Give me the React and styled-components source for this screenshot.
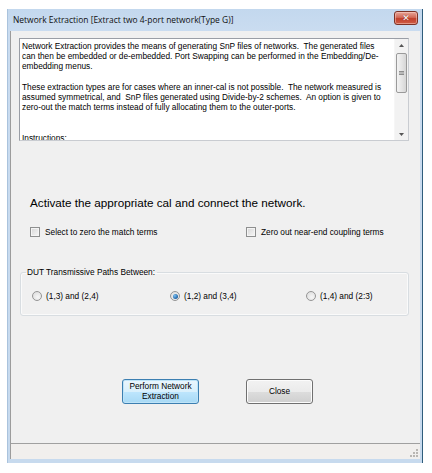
import React from 'react';
import styled, { createGlobalStyle } from 'styled-components';

const Global = createGlobalStyle`
  html, body { margin: 0; padding: 0; background: #ffffff; }
  body { width: 432px; height: 473px; overflow: hidden; font-family: "Liberation Sans", Arial, sans-serif; color: #000; }
`;

const Window = styled.div`
  margin: 9px 0 0 7px;
  width: 416px;
  height: 454px;
  box-sizing: border-box;
  display: flex;
  flex-direction: column;
  background: linear-gradient(#c3d8ee, #cadcf0 22px, #c7daee);
  border-right: 1px solid #2f5d7c;
  border-left: 1px solid #aac3dd;
`;

const TitleBar = styled.div`
  height: 22px;
  display: flex;
  align-items: flex-start;
  justify-content: space-between;
  padding: 0 4px 0 5px;
  flex: none;
`;

const Title = styled.span`
  font-family: "Open Sans", "Noto Sans", sans-serif;
  font-size: 8.45px;
  line-height: 22px;
  color: #101010;
  white-space: nowrap;
`;

const CloseButton = styled.div`
  margin-top: 2px;
  width: 24px;
  height: 14px;
  box-sizing: border-box;
  border: 1px solid #7d3226;
  border-radius: 3px;
  background: linear-gradient(#e8a699, #d26a58 45%, #c2402c 55%, #cf5c44);
  box-shadow: inset 0 0 0 1px rgba(255, 220, 210, 0.45);
  display: flex;
  align-items: center;
  justify-content: center;
  color: #fff;
  font-family: "DejaVu Sans", sans-serif;
  font-weight: bold;
  font-size: 9px;
  line-height: 1;
  text-shadow: 0 0 1px #6b1e12;
`;

const Client = styled.div`
  flex: 1;
  margin: 0 2px 0 2px;
  display: flex;
  flex-direction: column;
  background: #f0f0f0;
  border-left: 1px solid #9c9c9c;
  min-height: 0;
`;

const TextBox = styled.div`
  margin: 7px 0 0 8px;
  width: 390px;
  height: 103px;
  box-sizing: border-box;
  border: 1px solid #9a9ea6;
  border-right-color: #c9ccd1;
  border-bottom-color: #c9ccd1;
  background: #fff;
  display: flex;
  overflow: hidden;
`;

const TextContent = styled.div`
  flex: 1;
  padding: 2px 0 0 2px;
  font-size: 8.3px;
  line-height: 10.2px;
  white-space: pre;
  overflow: hidden;
`;

const ScrollBar = styled.div`
  width: 13px;
  flex: none;
  display: flex;
  flex-direction: column;
  align-items: center;
  background: #f2f2f2;
  border-left: 1px solid #f6f6f6;
`;

const Arrow = styled.div`
  height: 12px;
  width: 100%;
  display: flex;
  align-items: center;
  justify-content: center;
  flex: none;
`;

const Thumb = styled.div`
  margin-top: 2px;
  width: 11px;
  height: 40px;
  box-sizing: border-box;
  border: 1px solid #9a9a9a;
  border-radius: 2px;
  background: linear-gradient(90deg, #f3f3f3, #e6e6e6 50%, #d6d6d6);
  display: flex;
  align-items: center;
  justify-content: center;
`;

const Track = styled.div`
  flex: 1;
`;

const Heading = styled.div`
  margin: 55px 0 0 19px;
  font-size: 11.7px;
  line-height: 14px;
  white-space: nowrap;
`;

const CheckRow = styled.div`
  margin: 17px 0 0 19px;
  display: flex;
  height: 10px;
`;

const CheckItem = styled.label`
  display: flex;
  align-items: center;
  gap: 5px;
  width: ${(p) => p.$w || 'auto'};
  font-size: 8.3px;
  line-height: 10px;
  white-space: nowrap;
`;

const Box = styled.span`
  width: 10px;
  height: 10px;
  box-sizing: border-box;
  border: 1px solid #8e8f8f;
  background: linear-gradient(135deg, #d6d6d6, #f7f7f7);
  box-shadow: inset 0 0 0 1px #f4f4f4;
  flex: none;
`;

const Group = styled.fieldset`
  margin: 30px 0 0 9px;
  width: 389px;
  height: 49px;
  box-sizing: border-box;
  border: 1px solid #d8dde1;
  border-radius: 3px;
  padding: 0 0 0 11px;
  box-shadow: inset 0 0 0 1px #fafafa;
`;

const Legend = styled.legend`
  font-size: 8.3px;
  line-height: 10px;
  padding: 0 2px 0 1px;
  margin-left: -6px;
`;

const RadioRow = styled.div`
  margin-top: 13px;
  display: grid;
  grid-template-columns: 138px 136px auto;
  height: 12px;
  align-items: center;
`;

const RadioItem = styled.label`
  display: flex;
  align-items: center;
  gap: 4px;
  font-size: 8.3px;
  line-height: 10px;
  white-space: nowrap;
`;

const Radio = styled.span`
  width: 10px;
  height: 10px;
  box-sizing: border-box;
  border-radius: 50%;
  border: 1px solid #959595;
  background: radial-gradient(circle at 60% 65%, #f6f6f6, #d9d9d9);
  display: flex;
  align-items: center;
  justify-content: center;
  flex: none;
  &::after {
    content: '';
    display: ${(p) => (p.$on ? 'block' : 'none')};
    width: 5px;
    height: 5px;
    border-radius: 50%;
    background: radial-gradient(circle at 35% 35%, #7cc0f0, #2a6fb0 60%, #1b4f85);
  }
`;

const ButtonRow = styled.div`
  margin: 63px 0 0 111px;
  display: flex;
  gap: 47px;
  height: 25px;
`;

const Button = styled.div`
  width: ${(p) => p.$w}px;
  height: 25px;
  box-sizing: border-box;
  border: 1px solid ${(p) => (p.$focus ? '#3c7fb1' : '#707070')};
  border-radius: 3px;
  background: ${(p) =>
    p.$focus
      ? 'linear-gradient(#eaf6fd, #d9f0fc 50%, #bee6fd 50%, #a7d9f5)'
      : 'linear-gradient(#f2f2f2, #ebebeb 50%, #dddddd 50%, #cfcfcf)'};
  box-shadow: inset 0 0 0 1px ${(p) => (p.$focus ? '#bfe4f8' : '#fcfcfc')};
  display: flex;
  align-items: center;
  justify-content: center;
  text-align: center;
  font-size: 8.3px;
  line-height: 9.5px;
`;

const Spacer = styled.div`
  flex: 1;
`;

const StatusStrip = styled.div`
  height: 13px;
  flex: none;
  border-top: 1px solid #a0a0a0;
  background: #f1efed;
  display: flex;
  justify-content: flex-end;
  align-items: flex-end;
  padding: 0 2px 2px 0;
`;

const Grip = () => (
  <svg width="8" height="8" viewBox="0 0 8 8">
    {[
      [6, 0],
      [3, 3],
      [6, 3],
      [0, 6],
      [3, 6],
      [6, 6],
    ].map(([x, y], i) => (
      <rect key={i} x={x} y={y} width="2" height="2" fill="#b9b6b2" />
    ))}
  </svg>
);

const BottomFrame = styled.div`
  height: 4px;
  flex: none;
`;

const body = `Network Extraction provides the means of generating SnP files of networks.  The generated files
can then be embedded or de-embedded. Port Swapping can be performed in the Embedding/De-
embedding menus.

These extraction types are for cases where an inner-cal is not possible.  The network measured is
assumed symmetrical, and  SnP files generated using Divide-by-2 schemes.  An option is given to
zero-out the match terms instead of fully allocating them to the outer-ports.


Instructions:
`;

export default function App() {
  return (
    <>
      <Global />
      <Window>
        <TitleBar>
          <Title>Network Extraction [Extract two 4-port network(Type G)]</Title>
          <CloseButton>✕</CloseButton>
        </TitleBar>
        <Client>
          <TextBox>
            <TextContent>{body}</TextContent>
            <ScrollBar>
              <Arrow>
                <svg width="5" height="3" viewBox="0 0 5 3">
                  <path d="M0 3 L2.5 0 L5 3 Z" fill="#555" />
                </svg>
              </Arrow>
              <Thumb>
                <svg width="5" height="4" viewBox="0 0 5 4">
                  <path d="M0 0.5 H5 M0 2 H5 M0 3.5 H5" stroke="#777" strokeWidth="0.8" />
                </svg>
              </Thumb>
              <Track />
              <Arrow>
                <svg width="5" height="3" viewBox="0 0 5 3">
                  <path d="M0 0 L2.5 3 L5 0 Z" fill="#555" />
                </svg>
              </Arrow>
            </ScrollBar>
          </TextBox>
          <Heading>Activate the appropriate cal and connect the network.</Heading>
          <CheckRow>
            <CheckItem $w="216px">
              <Box />
              Select to zero the match terms
            </CheckItem>
            <CheckItem>
              <Box />
              Zero out near-end coupling terms
            </CheckItem>
          </CheckRow>
          <Group>
            <Legend>DUT Transmissive Paths Between:</Legend>
            <RadioRow>
              <RadioItem>
                <Radio />
                (1,3) and (2,4)
              </RadioItem>
              <RadioItem>
                <Radio $on />
                (1,2) and (3,4)
              </RadioItem>
              <RadioItem>
                <Radio />
                (1,4) and (2:3)
              </RadioItem>
            </RadioRow>
          </Group>
          <ButtonRow>
            <Button $w={77} $focus>
              Perform Network
              <br />
              Extraction
            </Button>
            <Button $w={67}>Close</Button>
          </ButtonRow>
          <Spacer />
          <StatusStrip>
            <Grip />
          </StatusStrip>
        </Client>
        <BottomFrame />
      </Window>
    </>
  );
}
